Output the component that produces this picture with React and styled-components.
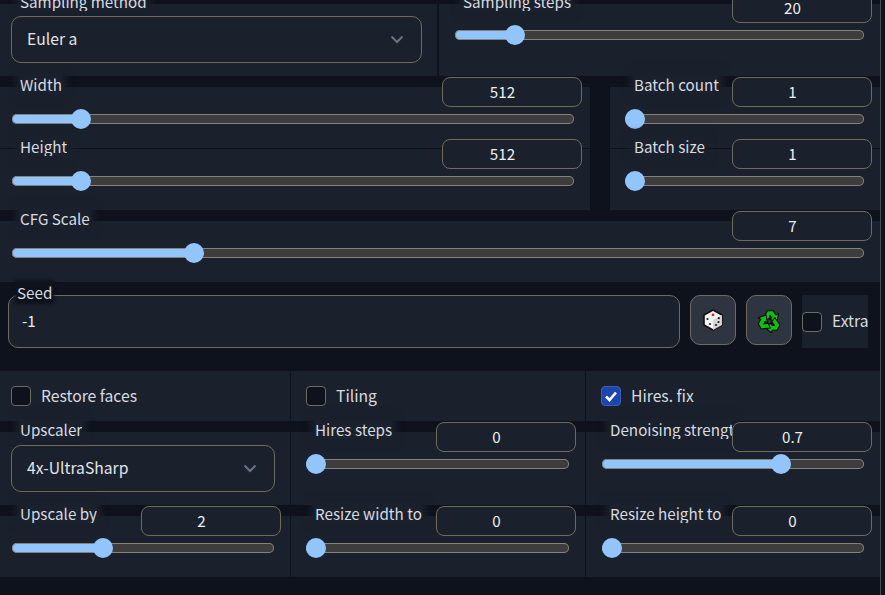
import React from 'react';
import styled, { createGlobalStyle } from 'styled-components';

const DARK = '#0e121d';
const PANEL = '#1a212c';
const EDGE = '#6f6a60';

const GlobalStyle = createGlobalStyle`
  html, body {
    margin: 0;
    height: 100%;
    overflow: hidden;
    background: ${DARK};
  }
  * {
    box-sizing: border-box;
  }
`;

const Page = styled.div`
  width: 881px;
  height: 603px;
  margin-top: -8px;
  border-right: 1px solid #4a4b50;
  font-family: "Noto Sans CJK SC", "Noto Sans", sans-serif;
  font-size: 15.2px;
  line-height: 20px;
  color: #d8dbe0;
`;

const Row = styled.div`
  display: grid;
  grid-template-columns: ${(props) => props.$columns};
  column-gap: ${(props) => props.$gap || 0}px;
`;

const Panel = styled.div`
  padding-top: 1px;
  min-width: 0;
  background: linear-gradient(${DARK}, ${DARK}) top / 100% ${(props) => props.$strip || 11}px no-repeat, ${PANEL};
  border-right: ${(props) => (props.$divider ? `1px solid ${DARK}` : 'none')};
`;

const Stack = styled.div`
  padding-bottom: 9px;
  min-width: 0;
`;

const Field = styled.div`
  display: flow-root;
  height: 62px;
  padding: 0 16px 0 ${(props) => props.$left || 16}px;
  background: ${(props) => (props.$line ? `linear-gradient(${DARK}, ${DARK}) 0 9px / 100% 1px no-repeat` : 'none')};
`;

const Header = styled.div`
  display: flex;
  justify-content: space-between;
  height: 30px;
  margin-right: -${(props) => props.$over || 8}px;
  padding-left: ${(props) => props.$indent || 8}px;
`;

const Caption = styled.span`
  display: block;
  flex: 0 1 auto;
  min-width: 0;
  height: 20px;
  margin-top: ${(props) => (props.$low ? -2 : -3)}px;
  white-space: nowrap;
  overflow: hidden;
  background: ${PANEL};
  box-shadow: 0 0 6px 4px ${PANEL};
`;

const NumberBox = styled.input`
  flex: none;
  width: 140px;
  height: 30px;
  padding: 0 4px 2px 0;
  border: 1px solid ${EDGE};
  border-radius: 8px;
  background: ${PANEL};
  color: #eceef1;
  font: inherit;
  text-align: center;
  outline: none;
`;

const Range = styled.input`
  display: block;
  width: 100%;
  height: 20px;
  margin: 2px 0 0;
  background: none;
  appearance: none;
  -webkit-appearance: none;

  &::-webkit-slider-runnable-track {
    height: 10px;
    border-radius: 5px;
    box-shadow: inset 0 0 0 1px #85827c;
    background: linear-gradient(
      to right,
      #93c5fd calc(10px + (100% - 20px) * var(--fill)),
      #3d3d3d calc(10px + (100% - 20px) * var(--fill))
    );
  }

  &::-webkit-slider-thumb {
    -webkit-appearance: none;
    width: 20px;
    height: 20px;
    margin-top: -5px;
    border: none;
    border-radius: 50%;
    background: #93c5fd;
  }
`;

const DropField = styled.div`
  display: flow-root;
  height: 83px;
  padding: 0 15px 0 11px;
`;

const DropCaption = styled(Caption)`
  width: fit-content;
  margin-left: 9px;
`;

const Dropdown = styled.button`
  display: flex;
  align-items: center;
  justify-content: space-between;
  width: 100%;
  height: 47px;
  margin-top: ${(props) => (props.$low ? 5 : 6)}px;
  padding: 0 17px 0 15px;
  border: 1px solid ${EDGE};
  border-radius: 10px;
  background: ${PANEL};
  color: #e3e5e9;
  font: inherit;
  font-size: 15.7px;
`;

const DropText = styled.span`
  margin-top: -1px;
`;

const SeedRow = styled.div`
  display: flex;
  gap: 10px;
  height: 89px;
  padding: 13px 0 0 8px;
`;

const SeedBox = styled.div`
  flex: none;
  width: 672px;
  height: 53px;
  border: 1px solid ${EDGE};
  border-radius: 10px;
  background: ${PANEL};
`;

const SeedCaption = styled.span`
  display: block;
  width: fit-content;
  height: 20px;
  margin: -14px 0 0 8px;
  background: ${DARK};
  box-shadow: 0 0 3px 2px ${DARK};
`;

const SeedValue = styled.div`
  padding: 8px 0 0 13px;
  color: #eceef1;
`;

const ToolButton = styled.button`
  display: flex;
  flex: none;
  align-items: center;
  justify-content: center;
  width: 46px;
  height: 50px;
  padding: 0;
  border: 1px solid ${EDGE};
  border-radius: 10px;
  background: #2f3540;
`;

const ExtraBox = styled.div`
  display: flex;
  flex: none;
  align-items: center;
  gap: 10px;
  width: 66px;
  height: 53px;
  overflow: hidden;
  background: ${PANEL};
  font-size: 15.7px;
`;

const ExtraText = styled.span`
  margin-top: -2px;
`;

const CheckCell = styled.div`
  display: flex;
  align-items: center;
  gap: 10px;
  height: 50px;
  padding-left: ${(props) => props.$left}px;
  background: ${PANEL};
  border-right: ${(props) => (props.$divider ? `1px solid ${DARK}` : 'none')};
  font-size: 15.7px;
`;

const Box = styled.span`
  display: flex;
  flex: none;
  align-items: center;
  justify-content: center;
  width: 20px;
  height: 20px;
  border: 1px solid ${(props) => (props.$checked ? '#3b5fb5' : EDGE)};
  border-radius: 4px;
  background: ${(props) => (props.$checked ? '#1d45b0' : DARK)};
`;

const Chevron = () => (
  <svg width="14" height="9" viewBox="0 0 14 9" fill="none" stroke="#6b7280" strokeWidth="2">
    <path d="M1.5 1.5 7 7l5.5-5.5" />
  </svg>
);

const CheckMark = () => (
  <svg width="14" height="14" viewBox="0 0 14 14" fill="none" stroke="#fff" strokeWidth="2.6">
    <path d="M2 7.5 5.5 11 12 3.5" />
  </svg>
);

const Dice = () => (
  <svg width="22" height="22" viewBox="0 0 22 22">
    <path d="M11 1 20 6v10l-9 5-9-5V6z" fill="#f4f4f4" stroke="#111" strokeWidth="1.6" strokeLinejoin="round" />
    <path d="M11 11 20 6v10l-9 5z" fill="#d4d4d4" />
    <circle cx="11" cy="5.8" r="1.4" fill="#d3222a" />
    <circle cx="5.5" cy="10" r="1.1" fill="#222" />
    <circle cx="8" cy="15" r="1.1" fill="#222" />
    <circle cx="14" cy="16" r="1.1" fill="#222" />
    <circle cx="16.5" cy="13" r="1.1" fill="#222" />
    <circle cx="16.8" cy="9.2" r="1.1" fill="#222" />
  </svg>
);

// one of the three chasing arrows, turned round the middle of the icon
const arrow = 'M6.2 10.6 9.8 2.6h5.8l2.4 4.2 2.6-1.4-1.4 7.8-7.4-2.4 2.4-1.3-1.4-2.5-1.6 3.9z';

const Recycle = () => (
  <svg width="25" height="25" viewBox="0 0 24 24">
    {[0, 120, 240].map((turn) => (
      <path
        key={turn}
        d={arrow}
        transform={`rotate(${turn} 12 13)`}
        fill="#10c010"
        stroke="#060a06"
        strokeWidth="1"
        strokeLinejoin="round"
      />
    ))}
  </svg>
);

const Slider = ({ label, min, max, value, left, line, over, indent, low }) => (
  <Field $left={left} $line={line}>
    <Header $over={over} $indent={indent}>
      <Caption $low={low}>{label}</Caption>
      <NumberBox type="number" min={min} max={max} defaultValue={value} />
    </Header>
    <Range
      type="range"
      min={min}
      max={max}
      step="any"
      defaultValue={value}
      style={{ '--fill': (value - min) / (max - min) }}
    />
  </Field>
);

const Select = ({ label, value, low }) => (
  <DropField>
    <DropCaption $low={low}>{label}</DropCaption>
    <Dropdown type="button" $low={low}>
      <DropText>{value}</DropText>
      <Chevron />
    </Dropdown>
  </DropField>
);

const Check = ({ label, checked, left, divider }) => (
  <CheckCell $left={left} $divider={divider}>
    <Box $checked={checked}>{checked && <CheckMark />}</Box>
    {label}
  </CheckCell>
);

export default function App() {
  return (
    <Page>
      <GlobalStyle />

      <Row $columns="437px 441px" $gap={2}>
        <Panel $strip={12}>
          <Select label="Sampling method" value="Euler a" low />
        </Panel>
        <Panel $strip={12}>
          <Slider label="Sampling steps" min={1} max={150} value={20} low />
        </Panel>
      </Row>

      <Row $columns="590px 270px" $gap={20}>
        <Panel>
          <Stack>
            <Slider label="Width" min={64} max={4160} value={512} left={12} />
            <Slider label="Height" min={64} max={4160} value={512} left={12} line />
          </Stack>
        </Panel>
        <Panel>
          <Stack>
            <Slider label="Batch count" min={1} max={100} value={1} left={15} indent={9} />
            <Slider label="Batch size" min={1} max={8} value={1} left={15} indent={9} line />
          </Stack>
        </Panel>
      </Row>

      <Panel>
        <Stack>
          <Slider label="CFG Scale" min={1} max={30} value={7} left={12} />
        </Stack>
      </Panel>

      <SeedRow>
        <SeedBox>
          <SeedCaption>Seed</SeedCaption>
          <SeedValue>-1</SeedValue>
        </SeedBox>
        <ToolButton type="button" aria-label="Random seed">
          <Dice />
        </ToolButton>
        <ToolButton type="button" aria-label="Reuse seed">
          <Recycle />
        </ToolButton>
        <ExtraBox>
          <Box />
          <ExtraText>Extra</ExtraText>
        </ExtraBox>
      </SeedRow>

      <Row $columns="291px 295px 294px">
        <Check label="Restore faces" left={11} divider />
        <Check label="Tiling" left={15} divider />
        <Check label="Hires. fix" left={15} checked />
      </Row>

      <Row $columns="291px 295px 294px">
        <Panel $divider>
          <Select label="Upscaler" value="4x-UltraSharp" />
        </Panel>
        <Panel $divider>
          <Slider label="Hires steps" min={0} max={150} value={0} left={15} indent={9} over={7} />
        </Panel>
        <Panel>
          <Slider label="Denoising strength" min={0} max={1} value={0.7} />
        </Panel>
      </Row>

      <Row $columns="291px 295px 294px">
        <Panel $divider>
          <Stack>
            <Slider label="Upscale by" min={1} max={4} value={2} left={12} over={7} />
          </Stack>
        </Panel>
        <Panel $divider>
          <Stack>
            <Slider label="Resize width to" min={0} max={2048} value={0} left={15} indent={9} over={7} />
          </Stack>
        </Panel>
        <Panel>
          <Stack>
            <Slider label="Resize height to" min={0} max={2048} value={0} />
          </Stack>
        </Panel>
      </Row>
    </Page>
  );
}
